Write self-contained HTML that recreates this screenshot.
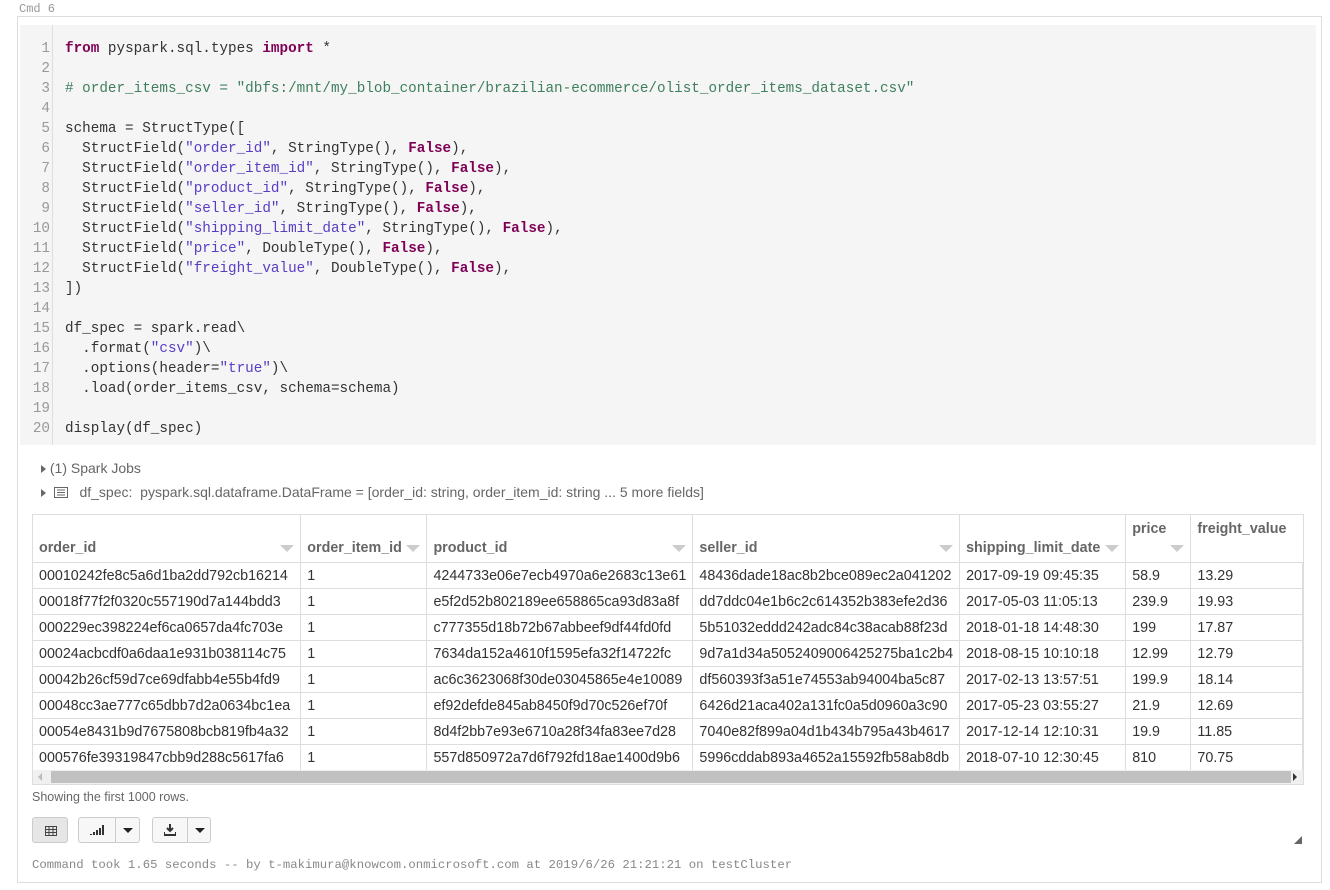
<!DOCTYPE html>
<html><head><meta charset="utf-8"><style>
body{margin:0;width:1330px;height:890px;background:#fff;position:relative;overflow:hidden;font-family:"Liberation Sans",Arial,sans-serif;}
.cmd{position:absolute;left:19px;top:2px;font:12px "Liberation Mono",monospace;color:#999;}
.cell{position:absolute;left:17px;top:16px;width:1305px;height:867px;border:1px solid #ddd;box-sizing:border-box;}
.code{position:absolute;left:20px;top:25px;width:1296px;height:420px;background:#f5f5f5;}
.gut{position:absolute;left:52px;top:25px;width:1px;height:420px;background:#ddd;}
.ln{position:absolute;left:20px;width:30px;text-align:right;font:14.3px "Liberation Mono",monospace;color:#999;margin-top:2px}
.cl{position:absolute;left:65px;font:14.3px "Liberation Mono",monospace;color:#333;white-space:pre;margin-top:2px}
.k{color:#7f0055;font-weight:bold}.s{color:#5a3dc2}.c{color:#3f7f5f}
.tx{position:absolute;font-size:14px;color:#666;white-space:pre;}
.tri{display:inline-block;width:0;height:0;border-left:5px solid #666;border-top:4px solid transparent;border-bottom:4px solid transparent;}
table{border-collapse:collapse;font-size:14.3px;color:#333;table-layout:fixed;}
.tw{position:absolute;left:32px;top:514px;width:1272px;height:271px;border:1px solid #ddd;box-sizing:border-box;overflow:hidden;}
th{height:35px;border-right:1px solid #ddd;border-bottom:1px solid #ddd;text-align:left;vertical-align:bottom;padding:6px 6px 6px;color:#666;font-weight:bold;position:relative;white-space:nowrap;}
th i{position:absolute;right:6px;bottom:10px;width:0;height:0;border-left:7px solid transparent;border-right:7px solid transparent;border-top:7px solid #ccc;}
th.t{vertical-align:top;}
td{height:25px;border-right:1px solid #ddd;border-bottom:1px solid #ddd;padding:0 6px;white-space:nowrap;overflow:hidden;}
.sb{position:absolute;left:33px;top:770px;width:1270px;height:14px;background:#f0f0f0;}
.sb div{position:absolute;left:18px;top:1px;height:12px;background:#c1c1c1;width:1240px;}
.btn{position:absolute;top:817px;height:26px;border:1px solid #ccc;border-radius:3px;background:#f7f7f7;box-sizing:border-box;}
.foot{position:absolute;left:32px;top:858px;font:12.3px "Liberation Mono",monospace;color:#888;}
</style></head><body>
<div class="cmd">Cmd 6</div>
<div class="cell"></div>
<div class="code"></div><div class="gut"></div>
<div class="ln" style="top:39px">1</div><div class="ln" style="top:59px">2</div><div class="ln" style="top:79px">3</div><div class="ln" style="top:99px">4</div><div class="ln" style="top:119px">5</div><div class="ln" style="top:139px">6</div><div class="ln" style="top:159px">7</div><div class="ln" style="top:179px">8</div><div class="ln" style="top:199px">9</div><div class="ln" style="top:219px">10</div><div class="ln" style="top:239px">11</div><div class="ln" style="top:259px">12</div><div class="ln" style="top:279px">13</div><div class="ln" style="top:299px">14</div><div class="ln" style="top:319px">15</div><div class="ln" style="top:339px">16</div><div class="ln" style="top:359px">17</div><div class="ln" style="top:379px">18</div><div class="ln" style="top:399px">19</div><div class="ln" style="top:419px">20</div>
<div class="cl" style="top:39px"><span class="k">from</span> pyspark.sql.types <span class="k">import</span> *</div>
<div class="cl" style="top:79px"><span class="c"># order_items_csv = "dbfs:/mnt/my_blob_container/brazilian-ecommerce/olist_order_items_dataset.csv"</span></div>
<div class="cl" style="top:119px">schema = StructType([</div>
<div class="cl" style="top:139px">  StructField(<span class="s">"order_id"</span>, StringType(), <span class="k">False</span>),</div>
<div class="cl" style="top:159px">  StructField(<span class="s">"order_item_id"</span>, StringType(), <span class="k">False</span>),</div>
<div class="cl" style="top:179px">  StructField(<span class="s">"product_id"</span>, StringType(), <span class="k">False</span>),</div>
<div class="cl" style="top:199px">  StructField(<span class="s">"seller_id"</span>, StringType(), <span class="k">False</span>),</div>
<div class="cl" style="top:219px">  StructField(<span class="s">"shipping_limit_date"</span>, StringType(), <span class="k">False</span>),</div>
<div class="cl" style="top:239px">  StructField(<span class="s">"price"</span>, DoubleType(), <span class="k">False</span>),</div>
<div class="cl" style="top:259px">  StructField(<span class="s">"freight_value"</span>, DoubleType(), <span class="k">False</span>),</div>
<div class="cl" style="top:279px">])</div>
<div class="cl" style="top:319px">df_spec = spark.read\</div>
<div class="cl" style="top:339px">  .format(<span class="s">"csv"</span>)\</div>
<div class="cl" style="top:359px">  .options(header=<span class="s">"true"</span>)\</div>
<div class="cl" style="top:379px">  .load(order_items_csv, schema=schema)</div>
<div class="cl" style="top:419px">display(df_spec)</div>
<div class="tx" style="left:41px;top:460px"><span class="tri"></span> (1) Spark Jobs</div>
<div class="tx" style="left:41px;top:484px"><span class="tri"></span>  <svg width="14" height="11" style="vertical-align:-1px"><rect x="0.5" y="0.5" width="13" height="10" fill="none" stroke="#666"/><path d="M3 3h8M3 5.5h8M3 8h8" stroke="#666"/></svg>   df_spec:  pyspark.sql.dataframe.DataFrame = [order_id: string, order_item_id: string ... 5 more fields]</div>
<div class="tw"><table>
<colgroup><col style="width:268px"><col style="width:127px"><col style="width:266px"><col style="width:266px"><col style="width:167px"><col style="width:66px"><col style="width:112px"></colgroup>
<tr><th>order_id<i></i></th><th>order_item_id<i></i></th><th>product_id<i></i></th><th>seller_id<i></i></th><th>shipping_limit_date<i></i></th><th class="t">price<i></i></th><th class="t" style="border-right:0">freight_value</th></tr>
<tr><td>00010242fe8c5a6d1ba2dd792cb16214</td><td>1</td><td>4244733e06e7ecb4970a6e2683c13e61</td><td>48436dade18ac8b2bce089ec2a041202</td><td>2017-09-19 09:45:35</td><td>58.9</td><td>13.29</td></tr>
<tr><td>00018f77f2f0320c557190d7a144bdd3</td><td>1</td><td>e5f2d52b802189ee658865ca93d83a8f</td><td>dd7ddc04e1b6c2c614352b383efe2d36</td><td>2017-05-03 11:05:13</td><td>239.9</td><td>19.93</td></tr>
<tr><td>000229ec398224ef6ca0657da4fc703e</td><td>1</td><td>c777355d18b72b67abbeef9df44fd0fd</td><td>5b51032eddd242adc84c38acab88f23d</td><td>2018-01-18 14:48:30</td><td>199</td><td>17.87</td></tr>
<tr><td>00024acbcdf0a6daa1e931b038114c75</td><td>1</td><td>7634da152a4610f1595efa32f14722fc</td><td>9d7a1d34a5052409006425275ba1c2b4</td><td>2018-08-15 10:10:18</td><td>12.99</td><td>12.79</td></tr>
<tr><td>00042b26cf59d7ce69dfabb4e55b4fd9</td><td>1</td><td>ac6c3623068f30de03045865e4e10089</td><td>df560393f3a51e74553ab94004ba5c87</td><td>2017-02-13 13:57:51</td><td>199.9</td><td>18.14</td></tr>
<tr><td>00048cc3ae777c65dbb7d2a0634bc1ea</td><td>1</td><td>ef92defde845ab8450f9d70c526ef70f</td><td>6426d21aca402a131fc0a5d0960a3c90</td><td>2017-05-23 03:55:27</td><td>21.9</td><td>12.69</td></tr>
<tr><td>00054e8431b9d7675808bcb819fb4a32</td><td>1</td><td>8d4f2bb7e93e6710a28f34fa83ee7d28</td><td>7040e82f899a04d1b434b795a43b4617</td><td>2017-12-14 12:10:31</td><td>19.9</td><td>11.85</td></tr>
<tr><td>000576fe39319847cbb9d288c5617fa6</td><td>1</td><td>557d850972a7d6f792fd18ae1400d9b6</td><td>5996cddab893a4652a15592fb58ab8db</td><td>2018-07-10 12:30:45</td><td>810</td><td>70.75</td></tr>
</table></div>
<div class="sb"><div></div><span style="position:absolute;left:5px;top:3px;border-right:4px solid #bbb;border-top:4px solid transparent;border-bottom:4px solid transparent"></span><span style="position:absolute;right:6px;top:3px;border-left:4px solid #333;border-top:4px solid transparent;border-bottom:4px solid transparent"></span></div>
<div class="tx" style="left:32px;top:790px;font-size:12.5px">Showing the first 1000 rows.</div>
<div class="btn" style="left:32px;width:36px;background:#e6e6e6"><svg width="12" height="10" style="position:absolute;left:12px;top:8px"><rect x="0.5" y="0.5" width="11" height="9" fill="none" stroke="#444"/><path d="M0 3.5h12M0 6.5h12M4 0v10M8 0v10" stroke="#444"/></svg></div>
<div class="btn" style="left:78px;width:62px"><svg width="14" height="11" style="position:absolute;left:11px;top:7px"><path d="M1 10v-1M4 10v-3M7 10v-5M10 10v-7M13 10v-10" stroke="#333" stroke-width="2"/></svg><span style="position:absolute;left:36px;top:0;width:1px;height:24px;background:#ccc"></span><span style="position:absolute;left:44px;top:10px;border-top:5px solid #222;border-left:5px solid transparent;border-right:5px solid transparent"></span></div>
<div class="btn" style="left:152px;width:59px"><svg width="12" height="12" style="position:absolute;left:11px;top:6px"><path d="M6 0v7M3 4l3 3 3-3M0 8v3h12v-3" stroke="#333" stroke-width="2" fill="none"/></svg><span style="position:absolute;left:34px;top:0;width:1px;height:24px;background:#ccc"></span><span style="position:absolute;left:42px;top:10px;border-top:5px solid #222;border-left:5px solid transparent;border-right:5px solid transparent"></span></div>
<svg width="8" height="8" style="position:absolute;left:1294px;top:836px"><path d="M8 0L0 8h8z" fill="#666"/></svg>
<div class="foot">Command took 1.65 seconds -- by t-makimura@knowcom.onmicrosoft.com at 2019/6/26 21:21:21 on testCluster</div>
</body></html>
